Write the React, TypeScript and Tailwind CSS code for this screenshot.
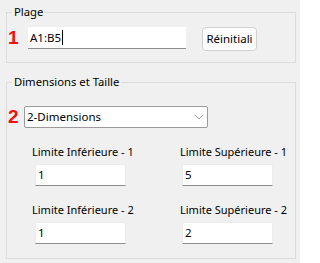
import { ChevronDown } from "lucide-react";

const font = { fontFamily: '"Noto Sans", sans-serif' };
const mark = { fontFamily: '"Liberation Sans", sans-serif' };

function Field({ value, className = "" }: { value: string; className?: string }) {
  return (
    <div
      className={`h-[22px] bg-white border border-[#ececec] border-b-[#8c8c8c] pl-[2px] flex items-center text-[11.5px] text-black ${className}`}
    >
      {value}
    </div>
  );
}

function Bound({ label, value, inset }: { label: string; value: string; inset: string }) {
  return (
    <div className="flex flex-col">
      <span className="text-[11px] leading-[16px] text-black whitespace-nowrap">{label}</span>
      <Field value={value} className={`mt-[4px] w-[91px] ${inset}`} />
    </div>
  );
}

export default function App() {
  return (
    <div className="w-[300px] h-[263px] bg-[#f0f0f0] pt-[4px] pl-[6px] pr-[4px]" style={font}>
      <fieldset className="border border-[#dcdcdc] p-0 m-0 pb-[11px]">
        <legend className="ml-[5px] px-[2px] text-[11.25px] leading-[16px] text-black">Plage</legend>
        <div className="flex items-start mt-[7px]">
          <span className="w-[21px] pl-[1px] text-[19px] leading-[22px] font-bold text-[#f01010]" style={mark}>1</span>
          <div className="w-[158px] h-[22px] bg-white border-b border-[#8c8c8c] pl-[2px] flex items-center text-[11.5px] text-black">
            A1:B5
            <span className="ml-[1px] w-px h-[15px] bg-black" />
          </div>
          <button className="ml-[16px] w-[55px] h-[24px] rounded-[4px] border border-[#d0d0d0] bg-[#fdfdfd] text-[11.5px] text-black">
            Réinitiali
          </button>
        </div>
      </fieldset>

      <fieldset className="mt-[11px] border border-[#dcdcdc] p-0 m-0 pb-[14px]">
        <legend className="ml-[5px] px-[2px] text-[11.25px] leading-[16px] text-black">Dimensions et Taille</legend>
        <div className="flex items-start mt-[16px]">
          <span className="w-[17px] pl-[1px] text-[19px] leading-[22px] font-bold text-[#f01010]" style={mark}>2</span>
          <div className="w-[184px] h-[22px] bg-white border border-[#9a9a9a] rounded-[2px] pl-[2px] flex items-center justify-between text-[11.5px] text-black">
            <span>2-Dimensions</span>
            <ChevronDown size={16} strokeWidth={1.1} className="text-[#7a7a7a]" />
          </div>
        </div>
        <div className="grid grid-cols-[148px_auto] ml-[25px] mt-[16px] gap-y-[16px]">
          <Bound label="Limite Inférieure - 1" value="1" inset="ml-[3px]" />
          <Bound label="Limite Supérieure - 1" value="5" inset="ml-[2px]" />
          <Bound label="Limite Inférieure - 2" value="1" inset="ml-[3px]" />
          <Bound label="Limite Supérieure - 2" value="2" inset="ml-[2px]" />
        </div>
      </fieldset>
    </div>
  );
}
